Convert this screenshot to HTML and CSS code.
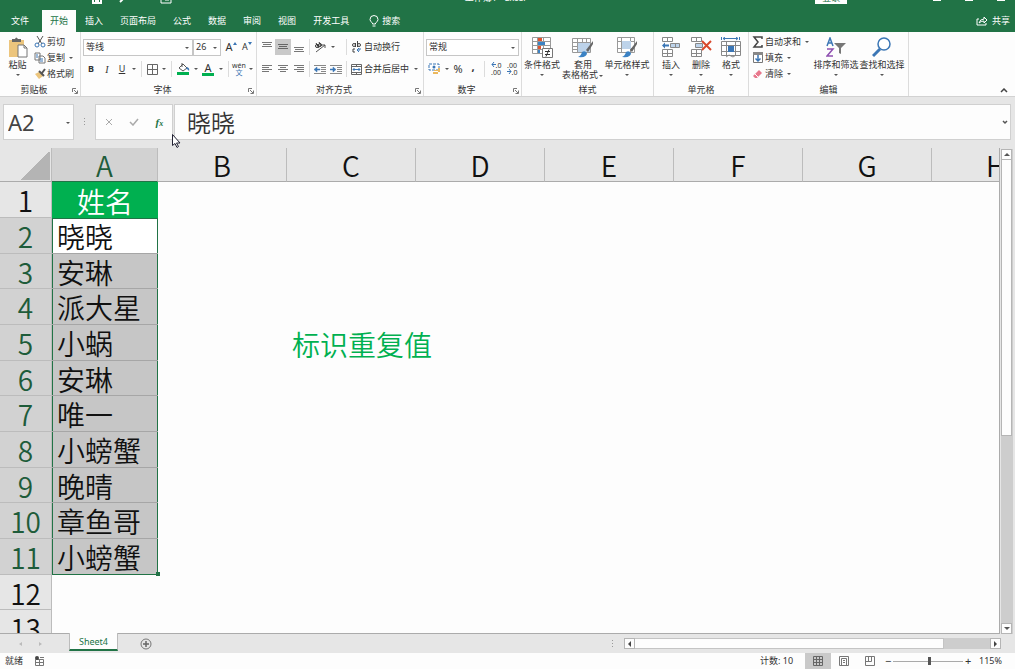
FILE: index.html
```html
<!DOCTYPE html>
<html lang="zh-CN">
<head>
  <meta charset="utf-8">
  <title>工作簿1 - Excel</title>
  <link rel="stylesheet" href="styles.css">
</head>
<body>
<header class="top">
  <div class="titlebar">
    <div class="quick">
      <svg width="12" height="12" viewBox="0 0 12 12"><path d="M2 0v11h8V0M5 11V8h2v3" fill="none" stroke="#fff" stroke-width="2"/></svg>
      <svg width="12" height="12" viewBox="0 0 12 12"><path d="M3 1h5q3 4-3 9" fill="none" stroke="#fff" stroke-width="2"/></svg>
      <svg class="touch" width="12" height="12" viewBox="0 0 12 12"><path d="M1 0h10v11H1zM5 3h4v5H5z" fill="none" stroke="#fff"/></svg>
    </div>
    <span class="doc">工作簿1 - Excel</span>
    <button class="login">登录</button>
    <div class="winbtns"><i></i><i></i><i></i></div>
  </div>
  <nav class="tabs">
    <a href="#" class="file">文件</a>
    <a href="#" class="active">开始</a>
    <a href="#">插入</a>
    <a href="#">页面布局</a>
    <a href="#">公式</a>
    <a href="#">数据</a>
    <a href="#">审阅</a>
    <a href="#">视图</a>
    <a href="#">开发工具</a>
    <a href="#" class="search"><svg width="10" height="13" viewBox="0 0 10 13"><path d="M3.500 9V8Q1 6.500 1 4.500a4 4 0 0 1 8 0Q9 6.500 6.500 8v1zM3.500 11h3" fill="none" stroke="#fff"/></svg>搜索</a>
    <a href="#" class="share"><svg width="12" height="10" viewBox="0 0 12 10"><path d="M3 3H1v6h9V7M3 7q1-4 5-4V1l3 3-3 3V5Q5 5 3 7z" fill="none" stroke="#fff"/></svg>共享</a>
  </nav>
</header>

<div class="ribbon">
  <section class="group clipboard">
    <div class="body">
      <button class="big">
        <svg width="20" height="21" viewBox="0 0 20 21"><path d="M1 3h15v17H1z" fill="#ecc57d"/><path d="M4 2h3q1-3 3 0h3v3H4z" fill="#666"/><path d="M10 8h6l3 3v9h-9z" fill="#fff" stroke="#777"/><path d="M16 8v3h3" fill="none" stroke="#777"/></svg>
        <span>粘贴</span><i class="arr"></i>
      </button>
      <div class="stack">
        <button><svg width="12" height="12" viewBox="0 0 12 12"><path d="M3 0l5 8M9 0L4 8" stroke="#555" fill="none"/><circle cx="3" cy="9" r="2" fill="none" stroke="#3b76b5"/><circle cx="9" cy="9" r="2" fill="none" stroke="#3b76b5"/></svg>剪切</button>
        <button><svg width="12" height="12" viewBox="0 0 12 12"><path d="M1 1h5v7H1zM5 4h4l2 2v5H5z" fill="#fff" stroke="#777"/><path d="M2 3h2M2 5h2M6 7h3M6 9h3" stroke="#3b76b5"/></svg>复制<i class="arr"></i></button>
        <button><svg width="12" height="12" viewBox="0 0 12 12"><path d="M1 6l4-2 4 4-4 3z" fill="#ecc57d"/><path d="M5 3l5 5M8 5l3-4" stroke="#555" stroke-width="2"/></svg>格式刷</button>
      </div>
    </div>
    <h2>剪贴板</h2><button class="launch" aria-label="剪贴板选项"><svg width="6" height="6" viewBox="0 0 6 6"><path d="M.5 4V.5H4M2 2l3 3M5.500 2.500v3h-3" fill="none" stroke="#777"/></svg></button>
  </section>

  <section class="group font">
    <div class="body rows">
      <div class="row">
        <span class="drop family"><select aria-label="字体"><option>等线</option></select></span>
        <span class="drop size"><select aria-label="字号"><option>26</option></select></span>
        <button class="w16 grow">A<svg width="4" height="3" viewBox="0 0 4 3"><path d="M0 3l2-3 2 3z" fill="#3b76b5"/></svg></button>
        <button class="w16 shrink">A<svg width="4" height="3" viewBox="0 0 4 3"><path d="M0 0l2 3 2-3z" fill="#3b76b5"/></svg></button>
      </div>
      <div class="row">
        <button class="w16"><b>B</b></button>
        <button class="w16 italic">I</button>
        <button class="w14"><u>U</u></button><i class="arr"></i>
        <i class="sep"></i>
        <button class="w14"><svg width="11" height="11" viewBox="0 0 11 11"><path d="M.5.5h10v10H.5zM5.500 0v11M0 5.500h11" fill="none" stroke="#666"/></svg></button><i class="arr"></i>
        <i class="sep"></i>
        <button class="w16"><svg width="13" height="12" viewBox="0 0 13 12"><path d="M2 5l4-4 4 4-4 3z" fill="#fff" stroke="#555"/><path d="M5 0v4" stroke="#555"/><path d="M10 4q3 1 2 4-1-2-3-2z" fill="#3b76b5"/><path d="M0 9h12v3H0z" fill="#00b050"/></svg></button><i class="arr"></i>
        <button class="w16 colour">A</button><i class="arr"></i>
        <i class="sep"></i>
        <button class="w14 pinyin"><span>wén</span><span>文</span></button><i class="arr"></i>
      </div>
    </div>
    <h2>字体</h2><button class="launch" aria-label="字体选项"><svg width="6" height="6" viewBox="0 0 6 6"><path d="M.5 4V.5H4M2 2l3 3M5.500 2.500v3h-3" fill="none" stroke="#777"/></svg></button>
  </section>

  <section class="group align">
    <div class="body rows">
      <div class="row">
        <button class="w16"><svg width="10" height="10" viewBox="0 0 10 10"><path d="M0 .5h10M1 2.500h8M0 4.500h10" stroke="#777"/></svg></button>
        <button class="w16 on"><svg width="10" height="10" viewBox="0 0 10 10"><path d="M0 2.500h10M1 4.500h8M0 6.500h10" stroke="#666"/></svg></button>
        <button class="w16"><svg width="10" height="10" viewBox="0 0 10 10"><path d="M0 5.500h10M1 7.500h8M0 9.500h10" stroke="#777"/></svg></button>
        <i class="sep"></i>
        <button class="w16"><svg width="12" height="12" viewBox="0 0 12 12"><path d="M2 11L11 4M8 4h3v3" stroke="#555" fill="none"/><circle cx="3" cy="5" r="1.500" fill="none" stroke="#333"/><circle cx="6" cy="4" r="1.500" fill="none" stroke="#333"/><path d="M2 2l3 5M5 1l2 4" stroke="#333"/></svg></button><i class="arr"></i>
        <i class="sep far"></i>
        <button class="wide"><svg width="11" height="12" viewBox="0 0 11 12"><circle cx="3" cy="4" r="1.500" fill="none" stroke="#444"/><path d="M4.500 2v4M6.500 0v6M4 8H2v3h2" fill="none" stroke="#444"/><circle cx="8" cy="4" r="1.500" fill="none" stroke="#444"/><path d="M9 7v2H6l2-2M6 9l2 2" fill="none" stroke="#3b76b5"/></svg>自动换行</button>
      </div>
      <div class="row">
        <button class="w16"><svg width="10" height="8" viewBox="0 0 10 8"><path d="M0 .5h10M0 2.500h7M0 4.500h10M0 6.500h7" stroke="#777"/></svg></button>
        <button class="w16"><svg width="10" height="8" viewBox="0 0 10 8"><path d="M0 .5h10M2 2.500h6M0 4.500h10M2 6.500h6" stroke="#777"/></svg></button>
        <button class="w16"><svg width="10" height="8" viewBox="0 0 10 8"><path d="M0 .5h10M3 2.500h7M0 4.500h10M3 6.500h7" stroke="#777"/></svg></button>
        <i class="sep"></i>
        <button class="w16"><svg width="12" height="9" viewBox="0 0 12 9"><path d="M0 .5h12M7 2.500h5M7 4.500h5M7 6.500h5M0 8.500h12" stroke="#888"/><path d="M0 4.500l3-2.500v5zM3 4h3v1H3z" fill="#3b76b5" stroke="#3b76b5" stroke-width=".5"/></svg></button>
        <button class="w16"><svg width="12" height="9" viewBox="0 0 12 9"><path d="M0 .5h12M7 2.500h5M7 4.500h5M7 6.500h5M0 8.500h12" stroke="#888"/><path d="M6 4.500L3 2v5zM0 4h3v1H0z" fill="#3b76b5" stroke="#3b76b5" stroke-width=".5"/></svg></button>
        <i class="sep"></i>
        <button class="wide"><svg width="11" height="11" viewBox="0 0 11 11"><path d="M.5.5h10v10H.5zM0 2.500h11M0 8.500h11M5.500 0v2M5.500 9v2" fill="none" stroke="#666"/><path d="M2 5.500h7M3.500 4L2 5.500 3.500 7M7.500 4L9 5.500 7.500 7" fill="none" stroke="#3b76b5"/></svg>合并后居中<i class="arr"></i></button>
      </div>
    </div>
    <h2>对齐方式</h2><button class="launch" aria-label="对齐选项"><svg width="6" height="6" viewBox="0 0 6 6"><path d="M.5 4V.5H4M2 2l3 3M5.500 2.500v3h-3" fill="none" stroke="#777"/></svg></button>
  </section>

  <section class="group number">
    <div class="body rows">
      <div class="row">
        <span class="drop format"><select aria-label="数字格式"><option>常规</option></select></span>
      </div>
      <div class="row">
        <button class="w16"><svg width="13" height="12" viewBox="0 0 13 12"><path d="M1 1h10v6H1z" fill="#fff" stroke="#3b76b5" stroke-dasharray="3 1"/><circle cx="6" cy="4" r="1.500" fill="#3b76b5"/><path d="M6 7h5v1H6zM5 9h5v2H5zM10 5h2v4h-2z" fill="#ecb95f"/></svg></button><i class="arr"></i>
        <button class="w14 sign">%</button>
        <button class="w16 sign comma">,</button>
        <i class="sep"></i>
        <button class="w16 dec"><span class="to"><svg width="5" height="5" viewBox="0 0 5 5"><path d="M5 2.500H1M3 0L1 2.500 3 5" fill="none" stroke="#3b76b5"/></svg>.0</span><span>.00</span></button>
        <button class="w16 dec"><span>.00</span><span class="to"><svg width="5" height="5" viewBox="0 0 5 5"><path d="M0 2.500h4M2 0l2 2.500L2 5" fill="none" stroke="#3b76b5"/></svg>.0</span></button>
      </div>
    </div>
    <h2>数字</h2><button class="launch" aria-label="数字选项"><svg width="6" height="6" viewBox="0 0 6 6"><path d="M.5 4V.5H4M2 2l3 3M5.500 2.500v3h-3" fill="none" stroke="#777"/></svg></button>
  </section>

  <section class="group style">
    <div class="body">
      <button class="big w40">
        <svg width="22" height="21" viewBox="0 0 22 21"><path d="M1.500.5h18v16h-18zM1 4.500h19M1 8.500h19M1 12.500h19M6.500 0v17M12.500 0v17" fill="#fff" stroke="#999"/><path d="M7 1h4v3H7zM7 9h3v3H7z" fill="#e0532f"/><path d="M7 5h7v3H7zM7 13h2v3H7z" fill="#3b82c4"/><path d="M11.500 11.500h10v9h-10z" fill="#fff" stroke="#777"/><path d="M14 14.500h5M14 17.500h5M18 12.500l-3 7" stroke="#333"/></svg>
        <span>条件格式</span><i class="arr"></i>
      </button>
      <button class="big w42">
        <svg width="22" height="21" viewBox="0 0 22 21"><path d="M.5 1.500h18v14H.5zM0 5.500h19M0 9.500h19M0 12.500h19M5.500 1v15M10.500 1v15M14.500 1v15" fill="#fff" stroke="#999"/><path d="M6 6h12v9H6z" fill="#bdd3ea"/><path d="M21 4l-7 9 2 2 5-8z" fill="#666"/><path d="M6 20q3-1 4-5 3-2 5 1 0 5-9 4z" fill="#3b82c4"/></svg>
        <span>套用</span><span>表格格式<i class="arr"></i></span>
      </button>
      <button class="big w46">
        <svg width="22" height="21" viewBox="0 0 22 21"><path d="M1.500.5h17v15h-17zM1 4.500h18M1 11.500h18M5.500 0v16M14.500 0v16" fill="#fff" stroke="#999"/><path d="M6 4h9v8H6z" fill="#bdd3ea"/><path d="M21 4l-7 9 2 2 5-8z" fill="#666"/><path d="M6 20q3-1 4-5 3-2 5 1 0 5-9 4z" fill="#3b82c4"/></svg>
        <span>单元格样式</span><i class="arr"></i>
      </button>
    </div>
    <h2>样式</h2>
  </section>

  <section class="group cells">
    <div class="body">
      <button class="big w30">
        <svg width="20" height="21" viewBox="0 0 20 21"><path d="M1.500.5h10v4h-10zM6.500 0v5M1.500 12.500h10v7h-10zM1 16.500h11M6.500 12v8" fill="#fff" stroke="#888"/><path d="M9.500 6.500h9v4h-9zM14.500 6v5" fill="#bdd3ea" stroke="#888"/><path d="M1 8.500l3-3v2h4v2H4v2z" fill="#3b76b5"/></svg>
        <span>插入</span><i class="arr"></i>
      </button>
      <button class="big w30">
        <svg width="22" height="21" viewBox="0 0 22 21"><path d="M1.500.5h10v4h-10zM6.500 0v5M1.500 12.500h10v7h-10zM1 16.500h11M6.500 12v8" fill="#fff" stroke="#888"/><path d="M5.500 6.500h7v4h-7z" fill="#bdd3ea" stroke="#888"/><path d="M12 4l9 9M21 4l-9 9" stroke="#d9482b" stroke-width="2"/></svg>
        <span>删除</span><i class="arr"></i>
      </button>
      <button class="big w30">
        <svg width="20" height="21" viewBox="0 0 20 21"><path d="M.5 4.500h19v14H.5zM0 8.500h20M0 14.500h20M5.500 4v15M14.500 4v15" fill="#fff" stroke="#888"/><path d="M7 9h6v6H7z" fill="#3b76b5"/><path d="M2 1.500h15M4 0L2 1.500 4 3M15 0l2 1.500L15 3M.5 0v3M18.500 0v3" fill="none" stroke="#3b76b5"/><path d="M5 20l3-2 4 2 3-2" fill="none" stroke="#888"/></svg>
        <span>格式</span><i class="arr"></i>
      </button>
    </div>
    <h2>单元格</h2>
  </section>

  <section class="group edit">
    <div class="body">
      <div class="stack">
        <button><svg width="12" height="12" viewBox="0 0 12 12"><path d="M10 3V1H2l4 5-4 5h8V9" fill="none" stroke="#444" stroke-width="1.500"/></svg>自动求和<i class="arr"></i></button>
        <button><svg width="12" height="12" viewBox="0 0 12 12"><path d="M1.500.5h9v10h-9z" fill="#fff" stroke="#777"/><path d="M1 0h10v3H1z" fill="#888"/><path d="M6 3v6M3.500 6.500L6 9l2.500-2.500" fill="none" stroke="#3b76b5" stroke-width="1.500"/></svg>填充<i class="arr"></i></button>
        <button><svg width="12" height="12" viewBox="0 0 12 12"><path d="M2 7l5-5 3 3-5 5H3L1 8z" fill="#e8788d"/><path d="M3 6l3 3" stroke="#fff"/></svg>清除<i class="arr"></i></button>
      </div>
      <button class="big w46">
        <svg width="20" height="21" viewBox="0 0 20 21"><path d="M1 9l3-8 3 8M2 6h4" fill="none" stroke="#3b76b5" stroke-width="1.500"/><path d="M1 12h6l-6 7h6" fill="none" stroke="#8e4fb0" stroke-width="1.500"/><path d="M8 6h12l-5 5v6l-2-1v-5z" fill="#777"/></svg>
        <span>排序和筛选</span><i class="arr"></i>
      </button>
      <button class="big w46">
        <svg width="20" height="21" viewBox="0 0 20 21"><circle cx="12" cy="7" r="6" fill="#fff" stroke="#3b76b5" stroke-width="1.500"/><path d="M8 12l-7 7" stroke="#3b76b5" stroke-width="3"/></svg>
        <span>查找和选择</span><i class="arr"></i>
      </button>
    </div>
    <h2>编辑</h2>
  </section>
  <button class="collapse" aria-label="折叠功能区"><svg width="8" height="5" viewBox="0 0 8 5"><path d="M1 4l3-3 3 3" fill="none" stroke="#444" stroke-width="1.500"/></svg></button>
</div>

<div class="formula">
  <span class="drop namebox"><input type="text" value="A2" aria-label="名称框"></span>
  <i class="dots"></i>
  <div class="fx">
    <button aria-label="取消"><svg width="8" height="8" viewBox="0 0 8 8"><path d="M1 1l6 6M7 1L1 7" stroke="#aaa"/></svg></button>
    <button aria-label="输入"><svg width="10" height="8" viewBox="0 0 10 8"><path d="M1 4l3 3 5-6" fill="none" stroke="#aaa" stroke-width="1.500"/></svg></button>
    <button class="fn">f<small>x</small></button>
    <svg class="pointer" width="9" height="14" viewBox="0 0 9 14"><path d="M.5.5v11l2.500-2 2 4 1.500-1-2-3.500h3.500z" fill="#fff" stroke="#223"/></svg>
  </div>
  <div class="entry">
    <input type="text" value="晓晓" aria-label="编辑栏">
    <button aria-label="展开编辑栏"><svg width="6" height="5" viewBox="0 0 6 5"><path d="M1 1l2 2 2-2" fill="none" stroke="#555" stroke-width="1.500"/></svg></button>
  </div>
</div>

<main class="work">
  <div class="sheet">
    <table>
      <colgroup><col class="c-head"><col class="c-a"><col><col><col><col><col><col><col></colgroup>
      <thead>
        <tr><th class="corner"></th><th class="sel">A</th><th>B</th><th>C</th><th>D</th><th>E</th><th>F</th><th>G</th><th>H</th></tr>
      </thead>
      <tbody>
        <tr><th>1</th><td class="title">姓名</td><td colspan="7"></td></tr>
        <tr><th class="sel">2</th><td class="pick first">晓晓</td><td colspan="7"></td></tr>
        <tr><th class="sel">3</th><td class="pick">安琳</td><td colspan="7"></td></tr>
        <tr><th class="sel">4</th><td class="pick">派大星</td><td colspan="7"></td></tr>
        <tr><th class="sel">5</th><td class="pick">小蜗</td><td></td><td class="note">标识重复值</td><td colspan="5"></td></tr>
        <tr><th class="sel">6</th><td class="pick">安琳</td><td colspan="7"></td></tr>
        <tr><th class="sel">7</th><td class="pick">唯一</td><td colspan="7"></td></tr>
        <tr><th class="sel">8</th><td class="pick">小螃蟹</td><td colspan="7"></td></tr>
        <tr><th class="sel">9</th><td class="pick">晚晴</td><td colspan="7"></td></tr>
        <tr><th class="sel">10</th><td class="pick">章鱼哥</td><td colspan="7"></td></tr>
        <tr><th class="sel">11</th><td class="pick last">小螃蟹</td><td colspan="7"></td></tr>
        <tr><th>12</th><td></td><td colspan="7"></td></tr>
        <tr><th>13</th><td></td><td colspan="7"></td></tr>
      </tbody>
    </table>
  </div>
  <div class="vscroll">
    <button class="up" aria-label="向上"></button>
    <div class="thumb"></div>
    <button class="down" aria-label="向下"></button>
  </div>
</main>

<div class="sheetbar">
  <button class="nav prev" aria-label="上一个"></button>
  <button class="nav next" aria-label="下一个"></button>
  <a href="#" class="sheettab">Sheet4</a>
  <button class="add" aria-label="新工作表"><svg width="12" height="12" viewBox="0 0 12 12"><circle cx="6" cy="6" r="5" fill="none" stroke="#777"/><path d="M6 3v6M3 6h6" stroke="#666" stroke-width="1.500"/></svg></button>
  <i class="dots"></i>
  <div class="hscroll">
    <button class="left" aria-label="向左"></button>
    <div class="thumb"></div>
    <button class="right" aria-label="向右"></button>
  </div>
</div>

<footer class="status">
  <span>就绪</span>
  <svg class="macro" width="10" height="10" viewBox="0 0 10 10"><path d="M.5 3.500h8v6h-8zM0 6.500h9M4.500 3v7" fill="none" stroke="#777"/><circle cx="2" cy="2" r="2" fill="#444"/><path d="M5 1.500h4" stroke="#777"/></svg>
  <span class="count">计数: 10</span>
  <button class="view on" aria-label="普通"><svg width="10" height="10" viewBox="0 0 10 10"><path d="M.5.5h9v9h-9zM0 3.500h10M0 6.500h10M3.500 0v10M6.500 0v10" fill="none" stroke="#666"/></svg></button>
  <button class="view" aria-label="页面布局"><svg width="10" height="10" viewBox="0 0 10 10"><path d="M.5.5h9v9h-9zM2.500 2.500h5v7h-5zM4 4.500h2M4 6.500h2" fill="none" stroke="#777"/></svg></button>
  <button class="view" aria-label="分页预览"><svg width="10" height="10" viewBox="0 0 10 10"><path d="M.5.5h9v9h-9zM3.500 0v5.500M6.500 0v5.500H0" fill="none" stroke="#777"/></svg></button>
  <button class="zoom">−</button>
  <input type="range" min="0" max="100" value="52" aria-label="缩放">
  <button class="zoom">+</button>
  <span class="percent">115%</span>
</footer>
</body>
</html>
```

FILE: styles.css
```css
* {
  box-sizing: border-box;
}

body {
  margin: 0;
  height: 100vh;
  display: flex;
  flex-direction: column;
  overflow: hidden;
  background: #fdfdfd;
  color: #333;
  font: 9px/12px "Noto Sans", "Noto Sans CJK SC", sans-serif;
}

button, input, select {
  margin: 0;
  padding: 0;
  border: 0;
  background: none;
  color: inherit;
  font: inherit;
}

button {
  display: flex;
  align-items: center;
  justify-content: center;
  white-space: nowrap;
}

svg {
  display: block;
  flex: none;
}

a {
  color: inherit;
  text-decoration: none;
}

/* title bar and tabs */
.top {
  background: #217346;
  color: #fff;
}

.titlebar {
  display: flex;
  align-items: flex-start;
  justify-content: space-between;
  height: 10px;
  overflow: hidden;
}

.quick {
  display: flex;
  gap: 12px;
  width: 379px;
  padding-left: 91px;
  margin-top: -8px;
}

.touch {
  margin-left: 21px;
}

.doc {
  margin-top: -8px;
}

.login {
  width: 32px;
  height: 12px;
  margin: -8px 0 0 204px;
  background: #fff;
  color: #217346;
}

.winbtns {
  display: flex;
  gap: 24px;
  padding-right: 10px;
}

.winbtns i {
  width: 8px;
  height: 1px;
  background: #fff;
}

.tabs {
  display: flex;
  gap: 1px;
  height: 22px;
  padding-left: 3px;
}

.tabs a {
  display: flex;
  align-items: center;
  padding: 0 8px;
}

.tabs .file {
  margin-right: 4px;
}

.tabs .active {
  background: #fdfdfd;
  color: #217346;
}

.tabs .search {
  gap: 3px;
  padding-left: 11px;
}

.tabs .share {
  gap: 4px;
  margin-left: auto;
  padding-right: 5px;
}

/* ribbon */
.ribbon {
  display: flex;
  flex: none;
  height: 65px;
  border-bottom: 1px solid #d2d2d2;
}

.group {
  position: relative;
  display: flex;
  flex-direction: column;
  flex: none;
  border-right: 1px solid #dcdcdc;
}

.group h2 {
  margin: 0;
  padding-right: 12px;
  font-size: 9px;
  font-weight: 400;
  text-align: center;
}

.style h2, .cells h2, .edit h2 {
  padding: 0;
}

.clipboard { width: 81px; }
.font { width: 176px; }
.align { width: 167px; }
.number { width: 98px; }
.style { width: 132px; }
.cells { width: 95px; }
.edit { width: 160px; }

.body {
  display: flex;
  flex: 1;
}

.rows {
  flex-direction: column;
  gap: 6px;
  padding: 7px 0 0 2px;
}

.row {
  display: flex;
  align-items: center;
  height: 16px;
}

.stack {
  display: flex;
  flex-direction: column;
  padding: 2px 0 0 3px;
}

.edit .stack {
  width: 64px;
}

.stack button {
  justify-content: flex-start;
  gap: 1px;
  height: 16px;
}

.big {
  flex-direction: column;
  justify-content: flex-start;
  padding-top: 5px;
  line-height: 10px;
}

.big svg {
  margin-bottom: 2px;
}

.big > .arr {
  height: 10px;
}

.clipboard .big {
  width: 31px;
  padding-left: 4px;
}

.cells .body {
  padding-left: 2px;
}

.w14 { width: 14px; }
.w16 { width: 16px; }
.w30 { width: 30px; }
.w40 { width: 40px; }
.w42 { width: 42px; }
.w46 { width: 46px; }

.w14, .w16 {
  height: 16px;
}

.on {
  background: #c9c9c9;
}

.arr {
  display: inline-flex;
  align-items: center;
  justify-content: center;
  width: 9px;
}

.big span .arr {
  width: 6px;
  vertical-align: middle;
}

.arr::before, .drop::after {
  content: "";
  border: 2px solid transparent;
  border-top-color: #555;
  border-bottom: 0;
}

.sep {
  width: 1px;
  height: 16px;
  margin: 0 2px;
  background: #dcdcdc;
}

.font .sep, .number .sep {
  margin: 0 3px;
}

.align .far {
  margin-left: 9px;
}

.wide {
  gap: 2px;
  padding-left: 2px;
}

.drop {
  position: relative;
  display: flex;
  height: 17px;
  border: 1px solid #c6c6c6;
  background: #fff;
}

.drop select, .drop input {
  width: 100%;
  padding-left: 2px;
  appearance: none;
}

.drop::after {
  position: absolute;
  right: 3px;
  top: 50%;
}

.family { width: 110px; }
.size { width: 28px; margin-right: 2px; }
.format { width: 93px; }

.grow {
  font-size: 11px;
}

.grow svg, .shrink svg {
  align-self: flex-start;
  margin-top: 3px;
}

.italic {
  font: italic 10px "Liberation Serif", serif;
}

.w16.colour {
  width: 12px;
  height: 13px;
  margin: 0 2px;
  border-bottom: 3px solid #00b050;
  font-size: 11px;
  line-height: 10px;
}

.pinyin, .dec {
  flex-direction: column;
  font-size: 7px;
  line-height: 7px;
}

.pinyin span + span {
  color: #3b76b5;
}

.to {
  display: flex;
}

.sign {
  font-size: 11px;
}

.comma {
  font-weight: 700;
  padding-bottom: 4px;
}

.launch {
  position: absolute;
  right: 2px;
  bottom: 2px;
}

.collapse {
  align-self: flex-end;
  margin-left: auto;
  padding: 0 7px 3px;
}

/* formula bar */
.formula {
  display: flex;
  flex: none;
  height: 51px;
  padding: 7px 4px 8px 3px;
  background: #e6e6e6;
}

.formula > div, .namebox {
  height: 36px;
  border: 1px solid #d0d0d0;
  background: #fdfdfd;
}

.namebox {
  width: 71px;
  font-size: 22px;
}

.namebox input {
  padding-left: 4px;
  color: #444;
}

.dots {
  width: 1px;
  height: 8px;
  background: repeating-linear-gradient(#999 0 1px, transparent 1px 3px);
}

.formula .dots {
  margin: 14px 10px 0;
}

.fx {
  position: relative;
  display: flex;
  width: 78px;
  margin-right: 1px;
}

.fx button {
  flex: 1;
}

.fn {
  color: #217346;
  font: italic 700 11px "Liberation Serif", serif;
}

.fn small {
  font-size: 8px;
  align-self: center;
  padding-top: 2px;
}

.pointer {
  position: absolute;
  left: 76px;
  top: 29px;
  z-index: 1;
}

.entry {
  display: flex;
  flex: 1;
}

.entry input {
  flex: 1;
  min-width: 0;
  padding-left: 12px;
  color: #333;
  font: 350 24px/32px "Noto Sans CJK SC", sans-serif;
}

.entry button {
  width: 10px;
}

/* grid */
.work {
  display: flex;
  flex: 1;
  min-height: 0;
  background: #e6e6e6;
}

.sheet {
  flex: 1;
  min-width: 0;
  overflow: hidden;
  border-right: 1px solid #ababab;
  border-bottom: 1px solid #ababab;
  background: #fdfdfd;
}

table {
  width: 1061px;
  border-spacing: 0;
  table-layout: fixed;
  color: #111;
  font: 350 28px/32px "Noto Sans CJK SC", sans-serif;
}

.c-head { width: 52px; }
.c-a { width: 106px; }

tr {
  height: 36px;
}

thead tr {
  height: 34px;
}

tbody tr:nth-child(3n) {
  height: 35px;
}

th, td {
  padding: 1px 0 0;
  white-space: nowrap;
}

th {
  border-right: 1px solid #bcbcbc;
  border-bottom: 1px solid #bcbcbc;
  background: #e6e6e6;
  font-weight: 350;
}

thead th {
  border-bottom-color: #ababab;
}

th.sel {
  background: #d2d2d2;
  color: #1e5c3a;
}

thead .sel {
  border-bottom-color: #217346;
}

.corner {
  background: linear-gradient(135deg, transparent 50%, #b4b4b4 50%) 20px 4px / 30px 28px no-repeat #e6e6e6;
}

td {
  padding-left: 5px;
}

.title {
  padding-left: 0;
  background: #00b050;
  color: #fff;
  text-align: center;
}

.pick {
  position: relative;
  border-bottom: 1px solid #a6a6a6;
  background: #c6c6c6;
  box-shadow: inset 1px 0 #217346, inset -1px 0 #217346;
}

.first {
  background: #fff;
  box-shadow: inset 1px 0 #217346, inset -1px 0 #217346, inset 0 1px #217346;
}

.last {
  border-bottom-color: #217346;
}

.last::after {
  content: "";
  position: absolute;
  right: -2px;
  bottom: -2px;
  width: 4px;
  height: 4px;
  background: #217346;
}

.note {
  color: #00b050;
}

/* scroll bars */
.vscroll {
  display: flex;
  flex-direction: column;
  width: 12px;
  margin: 1px 2px 0 1px;
  background: #cdcdcd;
}

.vscroll button, .hscroll button {
  flex: none;
  width: 11px;
  height: 11px;
  border: 1px solid #b5b5b5;
  background: #fdfdfd;
}

.vscroll .thumb {
  flex: 0 0 57%;
  width: 11px;
  border: 1px solid #b5b5b5;
  border-top: 0;
  background: #fdfdfd;
}

.vscroll .down {
  margin-top: auto;
}

.up::before, .down::before, .left::before, .right::before, .nav::before {
  content: "";
  border: 3px solid transparent;
}

.up::before { border-width: 0 3px 3px; border-bottom-color: #555; }
.down::before { border-width: 3px 3px 0; border-top-color: #555; }
.left::before { border-width: 3px 3px 3px 0; border-right-color: #444; }
.right::before { border-width: 3px 0 3px 3px; border-left-color: #444; }

.sheetbar {
  display: flex;
  align-items: center;
  flex: none;
  height: 19px;
  padding: 0 14px 0 10px;
  background: #e6e6e6;
}

.nav {
  width: 20px;
}

.prev::before { border-width: 2px 3px 2px 0; border-right-color: #bbb; }
.next::before { border-width: 2px 0 2px 3px; border-left-color: #bbb; }

.sheettab {
  align-self: stretch;
  width: 49px;
  height: 18px;
  margin: -1px 22px 0 19px;
  border: solid #bcbcbc;
  border-width: 0 1px;
  border-bottom: 2px solid #217346;
  background: #fdfdfd;
  color: #217346;
  font-size: 9px;
  line-height: 18px;
  text-align: center;
}

.sheetbar .dots {
  margin: 0 11px 0 auto;
}

.hscroll {
  display: flex;
  width: 38%;
  height: 11px;
  background: #cdcdcd;
}

.hscroll .thumb {
  width: 82%;
  border: 1px solid #c4c4c4;
  border-left: 0;
  background: #fdfdfd;
}

.hscroll .right {
  margin-left: auto;
}

/* status bar */
.status {
  display: flex;
  align-items: center;
  flex: none;
  height: 16px;
  padding: 0 13px 0 5px;
}

.macro {
  margin-left: 12px;
}

.count {
  margin: 0 12px 0 auto;
}

.view {
  width: 26px;
  height: 16px;
}

.zoom {
  width: 10px;
  font-size: 11px;
}

.status input {
  width: 70px;
  height: 10px;
  appearance: none;
  background: linear-gradient(#aaa, #aaa) center / 100% 1px no-repeat;
}

.status input::-webkit-slider-thumb {
  appearance: none;
  width: 3px;
  height: 8px;
  background: #555;
}

.percent {
  margin-left: 6px;
}
```
